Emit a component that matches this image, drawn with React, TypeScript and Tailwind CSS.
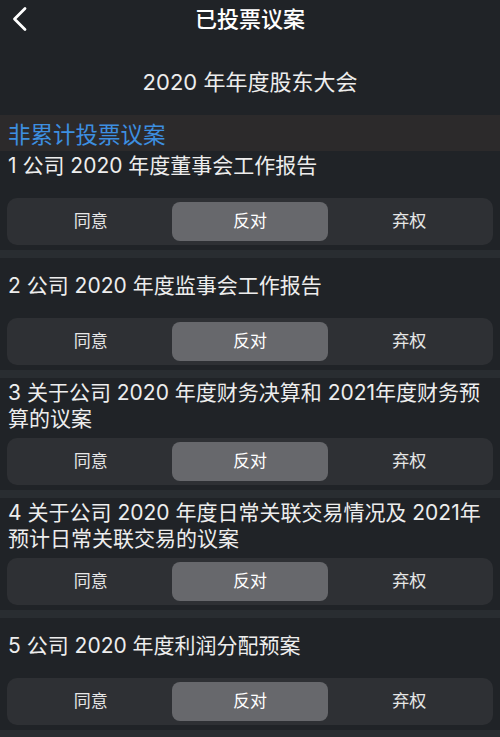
import React from "react";

const items: { title: React.ReactNode }[] = [
  { title: "1 公司 2020 年度董事会工作报告" },
  { title: "2 公司 2020 年度监事会工作报告" },
  {
    title: (
      <>
        3 关于公司 2020 年度财务决算和 2021年度财务预
        <br />
        算的议案
      </>
    ),
  },
  {
    title: (
      <>
        4 关于公司 2020 年度日常关联交易情况及 2021年
        <br />
        预计日常关联交易的议案
      </>
    ),
  },
  { title: "5 公司 2020 年度利润分配预案" },
];

function Segmented() {
  return (
    <div className="mx-[7px] h-[47px] rounded-[10px] bg-[#2e3034] p-[4px] grid grid-cols-3 text-[17px] text-[#e6e6e6]">
      <div className="flex items-center justify-center">同意</div>
      <div className="mx-[2px] flex items-center justify-center rounded-[8px] bg-[#67686c] text-white">反对</div>
      <div className="flex items-center justify-center">弃权</div>
    </div>
  );
}

export default function App() {
  return (
    <div className="w-[500px] h-[737px] overflow-hidden bg-[#202327] text-[#ededed] font-['Inter','Noto_Sans_CJK_SC',sans-serif]">
      {/* nav bar */}
      <div className="grid grid-cols-[44px_1fr_44px] h-[38px] items-center">
        <div className="pl-[10px] flex items-center">
          <svg width="20" height="26" viewBox="0 0 20 26" fill="none">
            <path d="M15 2.5 L4.5 13 L15 23.5" stroke="white" strokeWidth="2.8" strokeLinecap="round" strokeLinejoin="round" />
          </svg>
        </div>
        <div className="text-center text-[22px] leading-[26px] font-medium text-white">已投票议案</div>
        <div />
      </div>

      <div className="mt-[31px] h-[26px] text-center text-[22px] leading-[26px]">2020 年年度股东大会</div>

      <div className="mt-[20px] h-[36px] bg-[#2c2a2b] px-[8px] pt-[7px] text-[22.5px] leading-[26px] text-[#3d8fe0]">
        非累计投票议案
      </div>

      {items.map((it, i) => (
        <div key={i}>
          {i === 0 ? (
            <div className="h-[47px] px-[8px] pt-[2px] text-[21px] leading-[26px]">{it.title}</div>
          ) : (
            <div className="h-[60px] px-[8px] pb-[4px] flex items-center text-[21px] leading-[26px]">
              <div>{it.title}</div>
            </div>
          )}
          <Segmented />
          <div className="h-[5px]" />
          <div className="h-[8px] bg-[#292d31]" />
        </div>
      ))}
    </div>
  );
}
